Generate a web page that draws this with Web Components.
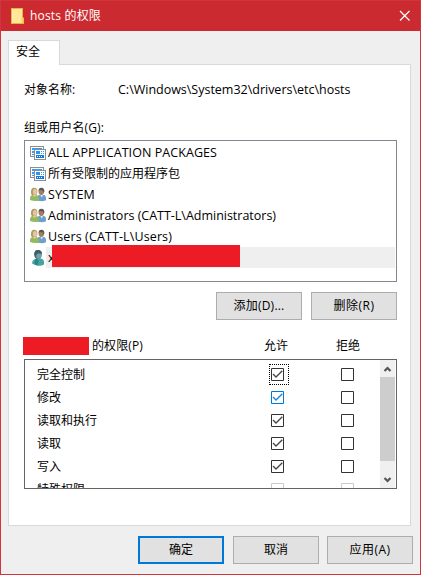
<!DOCTYPE html>
<html lang="zh-CN">
<head>
<meta charset="utf-8">
<title>hosts 的权限</title>
<style>
html,body{margin:0;height:100%;overflow:hidden}
body{font:12px/16px "Open Sans","Noto Sans CJK SC",sans-serif;color:#000}
</style>
</head>
<body>
<permissions-dialog></permissions-dialog>
<script>
const define = (name, html, setup) => customElements.define(name, class extends HTMLElement {
  connectedCallback() {
    if (this.shadowRoot) return;
    const t = document.createElement('template');
    t.innerHTML = html;
    this.attachShadow({mode: 'open'}).append(t.content.cloneNode(true));
    if (setup) setup(this, this.shadowRoot);
  }
});

/* Text whose tracking is adjusted to a fixed run width. */
define('ui-label', `<style>
  :host{display:block;white-space:pre;flex:none;height:16px;line-height:16px}
  span{display:inline-block;white-space:pre}
</style><span></span>`, (el, root) => {
  const s = root.querySelector('span'), text = el.getAttribute('text'), w = +el.getAttribute('w');
  s.textContent = text;
  if (/^[\x20-\x7e]+$/.test(text)) s.style.fontSize = '12.5px';
  if (w) {
    el.style.width = w + 'px';
    s.style.letterSpacing = (w - s.getBoundingClientRect().width) / text.length + 'px';
  }
});

const apps = `<svg width="16" height="16" viewBox="0 0 16 16" shape-rendering="crispEdges">
  <path fill="#fff" stroke="#8a8f94" d="M.5 1.500h13v10H.5z"/><path fill="#3a9cf0" d="M2 3h10v2H2zM2 6h2v2H2zM2 9h2v1H2z"/>
  <path fill="#fff" stroke="#8a8f94" d="M4.500 4.500h11v10h-11z"/><path fill="#2a96f0" d="M6 6h4v3H6z"/><path fill="#1478d8" d="M6 10h8v3H6z"/>
  <path fill="#fff" d="M7 11h1v1H7zM9 11h1v1H9zM11 11h1v1h-1z"/>
  <path fill="#2a96f0" d="M11 6h1v1h-1zM13 6h1v1h-1zM11 8h1v1h-1zM13 8h1v1h-1z"/></svg>`;
const group = `<svg width="16" height="16" viewBox="0 0 16 16">
  <path fill="#6f9fcf" d="M6.500 13.500V10.500Q7 8 10 7.700h3Q16 8 16 11v2.300Q13 14.500 10 14z"/><path fill="#e8eef4" d="M10.500 8h2.500l-1.300 2.500z"/>
  <ellipse cx="11.300" cy="4.600" rx="2.700" ry="3.400" fill="#a47c5e"/><path fill="#5c5653" d="M8.500 4Q8.600.8 11.500.8T14.400 4.500L13.600 6l-.5-2.500-3.200-.5z"/>
  <path fill="#92bb5c" d="M0 13V10.500Q.5 8 3.500 7.700h2.200Q8.600 8.500 9 11v2.500Q5 14.800 0 13z"/><path fill="#e0c6a0" d="M3 7h3v2l-1.500.800L3 9z"/>
  <path fill="#b09a68" d="M1 6.500Q.5.8 4.200.8T7.300 5.500L6.500 8H2z"/><ellipse cx="4.900" cy="4.900" rx="2" ry="2.900" fill="#e4c6a0"/></svg>`;
const user = `<svg width="16" height="16" viewBox="0 0 16 16">
  <path fill="#43a5a1" d="M2 13.500Q2 10.500 4 9.500l3-1h4q3 1 3 3.500v2.500Q11 16.500 7 15.500z"/><path fill="#2c8284" d="M5 9.500l2-1 1.500 2.500-1 4.500-3-1z"/>
  <ellipse cx="8" cy="4.600" rx="3.700" ry="4.500" fill="#48707c"/><ellipse cx="8.700" cy="5.600" rx="2.500" ry="3.200" fill="#75a0aa"/><path fill="#3a5f6e" d="M4.300 5Q4 .1 8 .1T12 4L8.700 3.300 6.300 4.500 6 7z"/></svg>`;

define('principal-row', `<style>
  :host{display:flex;height:21px;align-items:center;padding-left:5px}
  i{display:block;width:16px;height:16px;flex:none} svg{display:block}
  div{display:flex;flex:1;height:21px;align-items:center;padding-left:2px;box-sizing:border-box}
  :host([selected]) div{background:#efefef}
  :host([selected]) b{display:block;position:absolute;left:52px;top:245px;width:188px;height:22px;background:#ed1c24}
</style><i></i><div><slot></slot><b></b></div>`, (el, root) => {
  root.querySelector('i').innerHTML = {apps, group, user}[el.getAttribute('icon')];
});

define('push-button', `<style>
  :host{display:flex;box-sizing:border-box;width:86px;height:28px;border:1px solid #adadad;background:#e1e1e1;align-items:center;justify-content:center}
  :host([primary]){border:2px solid #0078d7}
</style><slot></slot>`);

define('check-box', `<style>
  :host{display:block;width:13px;height:13px;flex:none;position:relative;color:#333}
  :host([hot]){color:#0078d7} :host([disabled]){color:#ccc}
  :host([focused])::after{content:"";position:absolute;left:-2px;top:-4px;width:18px;height:19px;border:1px dotted #000}
  svg{display:block} .tick{display:none} :host([checked]) .tick{display:block}
</style><svg width="13" height="13"><path d="M.5.5h12v12H.5z" fill="#fff" stroke="currentColor"/><path class="tick" d="M2 6l3 3 6.300-6.200" fill="none" stroke="currentColor" stroke-width="1.350" opacity=".9"/></svg>`);

define('permission-row', `<style>
  :host{display:grid;grid-template-columns:234px 70px 13px;height:23px;align-items:center;padding-left:12px}
</style><ui-label></ui-label><check-box class="allow"></check-box><check-box></check-box>`, (el, root) => {
  const l = document.createElement('ui-label');
  l.setAttribute('text', el.getAttribute('name'));
  l.setAttribute('w', el.getAttribute('name').length * 12);
  root.querySelector('ui-label').replaceWith(l);
  for (const a of ['checked', 'hot', 'focused']) if (el.hasAttribute(a)) root.querySelector('.allow').setAttribute(a, '');
  if (el.hasAttribute('disabled')) root.querySelectorAll('check-box').forEach(c => c.setAttribute('disabled', ''));
});

define('scroll-bar', `<style>
  :host{display:flex;flex-direction:column;width:15px;height:128px;background:#f0f0f0;margin-right:1px}
  svg{display:block;flex:none} .thumb{height:84px;background:#cdcdcd} .gap{flex:1}
</style><svg width="15" height="17"><path d="M4.500 11l3-3 3 3" fill="none" stroke="#555" stroke-width="2.200"/></svg><div class="thumb"></div><div class="gap"></div>
<svg width="15" height="17"><path d="M4.500 7l3 3 3-3" fill="none" stroke="#555" stroke-width="2.200"/></svg>`);

define('title-bar', `<style>
  :host{display:flex;height:30px;background:#cc2a31;color:#fff;align-items:center;padding:0 9px 0 10px}
  svg{display:block;flex:none} ui-label{margin-left:3px} .sp{flex:1}
</style><svg width="16" height="16" viewBox="0 0 16 16"><path fill="#e2b73f" d="M0 0h12v9l1 1v6H0z"/><path fill="#ffe69a" d="M1 1h10v14H1z"/><path fill="#fff0b5" d="M1 1h1v14H1z"/><path fill="#f4cf63" d="M10.500 9l2 1v5h-2z"/></svg>
<ui-label text="hosts 的权限" w="71"></ui-label><div class="sp"></div>
<svg width="12" height="12"><path d="M1 1l9.500 9.500M10.500 1L1 10.500" stroke="#fff" stroke-width="1.200"/></svg>`);

define('permissions-dialog', `<style>
  :host{display:flex;flex-direction:column;box-sizing:border-box;width:421px;height:575px;border:1px solid #d0343d;background:#efefef}
  .tab{box-sizing:border-box;width:52px;height:25px;margin:9px 0 -1px 7px;background:#fff;border:1px solid #d9d9d9;border-bottom:0;padding:3px 0 0 7px;position:relative;flex:none}
  .panel{box-sizing:border-box;width:403px;height:462px;margin-left:7px;border:1px solid #d9d9d9;background:#fff;padding:17px 13px 0 15px;flex:none}
  .object{display:flex;gap:43px}
  .cap{margin-top:22px}
  .list{box-sizing:border-box;height:142px;margin-top:4px;border:1px solid #828790;padding:1px 1px 0 0}
  .actions{display:flex;gap:9px;justify-content:flex-end;margin-top:10px}
  .head{display:flex;height:18px;margin:17px 0 0 -1px;align-items:center}
  .mask{width:66px;height:18px;background:#ed1c24;margin-right:3px}
  .al{margin-left:121px}.de{margin-left:48px}
  .perms{box-sizing:border-box;height:130px;margin-top:4px;border:1px solid #646464;display:flex;justify-content:space-between;overflow:hidden}
  .rows{padding-top:3px}
  .footer{display:flex;gap:9px;margin:10px 0 0 137px} .cancel{margin-right:-1px}
</style>
<title-bar></title-bar>
<div class="tab"><ui-label text="安全" w="24"></ui-label></div>
<div class="panel">
  <div class="object"><ui-label text="对象名称:" w="51"></ui-label><ui-label text="C:\\Windows\\System32\\drivers\\etc\\hosts" w="232.5"></ui-label></div>
  <ui-label class="cap" text="组或用户名(G):" w="80"></ui-label>
  <div class="list">
    <principal-row icon="apps"><ui-label text="ALL APPLICATION PACKAGES" w="169"></ui-label></principal-row>
    <principal-row icon="apps"><ui-label text="所有受限制的应用程序包" w="132"></ui-label></principal-row>
    <principal-row icon="group"><ui-label text="SYSTEM" w="47"></ui-label></principal-row>
    <principal-row icon="group"><ui-label text="Administrators (CATT-L\\Administrators)" w="228"></ui-label></principal-row>
    <principal-row icon="group"><ui-label text="Users (CATT-L\\Users)" w="124"></ui-label></principal-row>
    <principal-row icon="user" selected><ui-label text="x"></ui-label></principal-row>
  </div>
  <div class="actions"><push-button><ui-label text="添加(D)..." w="51"></ui-label></push-button><push-button><ui-label text="删除(R)" w="41"></ui-label></push-button></div>
  <div class="head"><div class="mask"></div><ui-label text="的权限(P)" w="51"></ui-label><ui-label class="al" text="允许" w="24"></ui-label><ui-label class="de" text="拒绝" w="24"></ui-label></div>
  <div class="perms"><div class="rows">
    <permission-row name="完全控制" checked focused></permission-row>
    <permission-row name="修改" checked hot></permission-row>
    <permission-row name="读取和执行" checked></permission-row>
    <permission-row name="读取" checked></permission-row>
    <permission-row name="写入" checked></permission-row>
    <permission-row name="特殊权限" disabled></permission-row>
  </div><scroll-bar></scroll-bar></div>
</div>
<div class="footer"><push-button primary><ui-label text="确定" w="24"></ui-label></push-button><push-button class="cancel"><ui-label text="取消" w="24"></ui-label></push-button><push-button><ui-label text="应用(A)" w="41"></ui-label></push-button></div>`);
</script>
</body>
</html>
